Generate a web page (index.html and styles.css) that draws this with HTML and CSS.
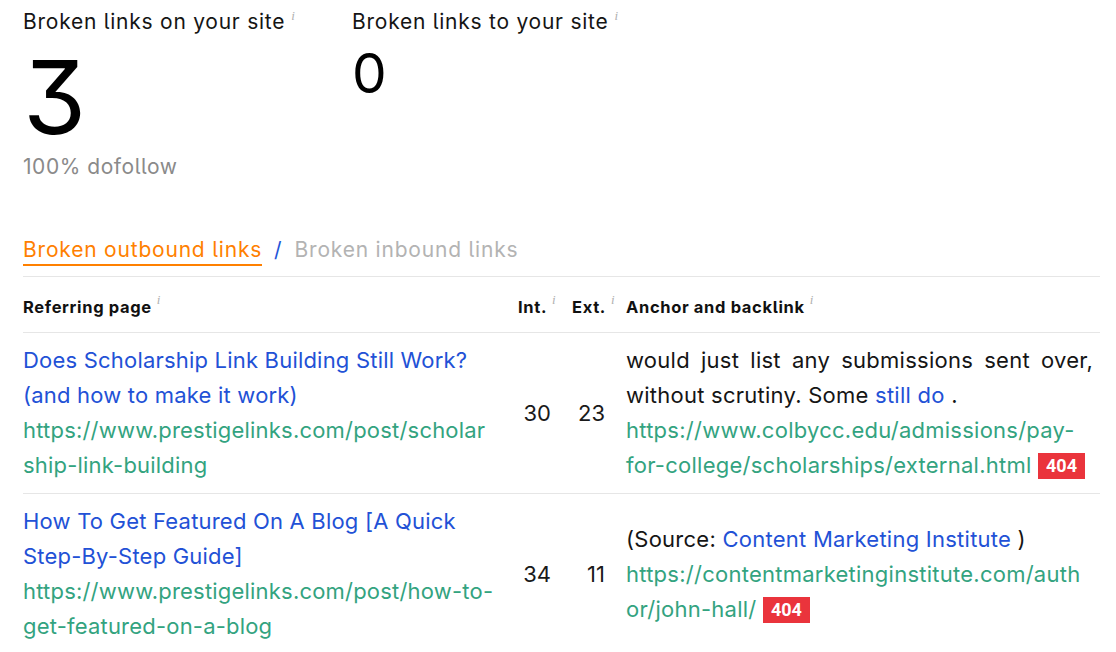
FILE: index.html
```html
<!DOCTYPE html>
<html>
<head>
<meta charset="utf-8">
<link rel="stylesheet" href="styles.css">
</head>
<body>
<div class="page">
  <div class="stats">
    <div class="stat stat-on">
      <div class="stat-title">Broken links on your site<span class="info">i</span></div>
      <div class="stat-big">3</div>
      <div class="stat-sub">100% dofollow</div>
    </div>
    <div class="stat stat-to">
      <div class="stat-title">Broken links to your site<span class="info">i</span></div>
      <div class="stat-mid">0</div>
    </div>
  </div>

  <div class="tabs">
    <span class="tab tab-active">Broken outbound links</span>
    <span class="tab-sep">/</span>
    <span class="tab tab-muted">Broken inbound links</span>
  </div>

  <table class="links">
    <colgroup>
      <col class="c-page">
      <col class="c-int">
      <col class="c-ext">
      <col class="c-anchor">
    </colgroup>
    <thead>
      <tr>
        <th>Referring page<span class="info">i</span></th>
        <th>Int.<span class="info">i</span></th>
        <th>Ext.<span class="info">i</span></th>
        <th>Anchor and backlink<span class="info">i</span></th>
      </tr>
    </thead>
    <tbody>
      <tr>
        <td class="col-page">
          <a class="title">Does Scholarship Link Building Still Work? (and how to make it work)</a>
          <a class="url">https://www.prestigelinks.com/post/scholarship-link-building</a>
        </td>
        <td class="num">30</td>
        <td class="num">23</td>
        <td class="col-anchor">
          <span class="anchor-text justify">would just list any submissions sent over, without scrutiny. Some <a class="link">still do</a> .</span>
          <span class="backlink"><a class="url">https://www.colbycc.edu/admissions/pay-for-college/scholarships/external.html</a> <span class="badge">404</span></span>
        </td>
      </tr>
      <tr>
        <td class="col-page">
          <a class="title">How To Get Featured On A Blog [A Quick Step-By-Step Guide]</a>
          <a class="url">https://www.prestigelinks.com/post/how-to-get-featured-on-a-blog</a>
        </td>
        <td class="num">34</td>
        <td class="num">11</td>
        <td class="col-anchor">
          <span class="anchor-text">(Source: <a class="link">Content Marketing Institute</a> )</span>
          <span class="backlink"><a class="url">https://contentmarketinginstitute.com/author/john-hall/</a> <span class="badge">404</span></span>
        </td>
      </tr>
    </tbody>
  </table>
</div>
</body>
</html>
```
FILE: styles.css
```css
html, body {
  margin: 0;
  padding: 0;
  background: #ffffff;
}
body {
  font-family: Inter, Roboto, "Liberation Sans", sans-serif;
  font-feature-settings: "cv05", "cv09";
  color: #111111;
}
.page {
  padding: 9px 16px 0 23px;
}
.stats {
  display: flex;
}
.stat-on {
  width: 329px;
}
.stat-title {
  font-size: 21px;
  line-height: 26px;
  letter-spacing: 0.75px;
  color: #151515;
}
.info {
  font-family: "Liberation Serif", serif;
  font-style: italic;
  font-size: 13px;
  letter-spacing: 0;
  font-weight: 400;
  color: #b0b0b0;
  vertical-align: top;
  position: relative;
  top: -6px;
  margin-left: 6px;
}
.stat-big {
  font-size: 102px;
  line-height: 106px;
  margin-top: 9px;
  color: #000;
}
.stat-mid {
  font-size: 55px;
  line-height: 56px;
  margin-top: 10px;
  color: #000;
}
.stat-sub {
  font-size: 21px;
  line-height: 26px;
  letter-spacing: 0.55px;
  color: #8a8a8a;
  margin-top: 4px;
}
.tabs {
  margin-top: 56px;
  padding-top: 1px;
  display: flex;
  align-items: flex-start;
  border-bottom: 1px solid #e6e6e6;
  height: 39px;
  font-size: 21px;
  line-height: 26px;
  letter-spacing: 0.8px;
}
.tab-active {
  color: #ff8000;
  border-bottom: 2.5px solid #ff8000;
  padding-bottom: 0.5px;
}
.tab-sep {
  color: #2355d8;
  margin: 0 12px 0 12px;
}
.tab-muted {
  color: #b3b3b3;
}
.links {
  border-collapse: collapse;
  table-layout: fixed;
  width: 1077px;
}
.c-page { width: 495px; }
.c-int { width: 54px; }
.c-ext { width: 54px; }
.c-anchor { width: 474px; }
.links th {
  font-weight: 700;
  font-size: 16.5px;
  letter-spacing: 0.65px;
  text-align: left;
  height: 50px;
  padding: 5px 0 0 0;
  border-bottom: 1px solid #e6e6e6;
  white-space: nowrap;
  color: #111;
}
.links th .info {
  margin-left: 5px;
  top: -5px;
}
.links td {
  font-size: 22px;
  line-height: 35px;
  vertical-align: middle;
  padding: 10px 0;
  border-bottom: 1px solid #e6e6e6;
  font-feature-settings: normal;
}
.links tbody tr:last-child td {
  border-bottom: none;
}
td.col-page {
  padding-right: 21px;
  letter-spacing: 0.2px;
  overflow-wrap: anywhere;
}
td.col-page .title, td.col-page .url {
  display: block;
}
.num {
  text-align: right;
  padding-right: 21px !important;
  color: #1a1a1a;
}
td.col-anchor {
  padding-right: 7px;
  overflow-wrap: anywhere;
}
.title, .link {
  color: #2251d6;
}
.url {
  color: #33a37f;
}
.anchor-text {
  display: block;
  color: #151515;
  letter-spacing: 0.25px;
}
.justify {
  text-align: justify;
  text-align-last: left;
}
.backlink {
  display: block;
  letter-spacing: 0.25px;
  max-width: 462px;
}
.badge {
  display: inline-block;
  background: #ea343c;
  color: #fff;
  font-family: Roboto, sans-serif;
  font-weight: 700;
  font-size: 18px;
  letter-spacing: 0;
  line-height: 26px;
  padding: 0 8px;
  vertical-align: 1px;
}
```
